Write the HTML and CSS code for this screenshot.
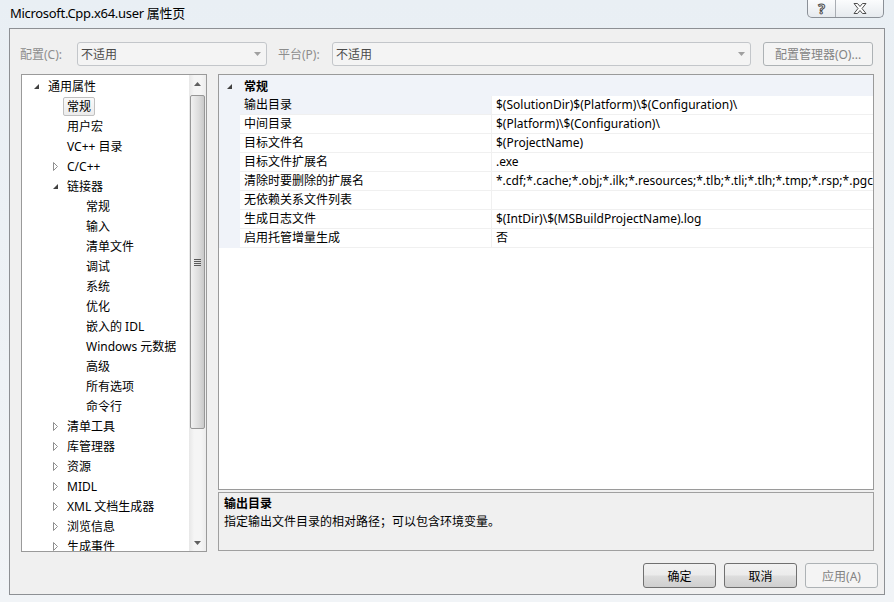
FILE: index.html
```html
<!DOCTYPE html>
<html lang="zh-CN">
<head>
    <meta charset="UTF-8">
    <meta name="viewport" content="width=device-width, initial-scale=1.0">
    <title>Microsoft.Cpp.x64.user 属性页</title>
    <link rel="stylesheet" href="styles.css">
</head>
<body>
    <div class="titlebar">
        <span class="title">Microsoft.Cpp.x64.user 属性页</span>
        <div class="caption-btns">
            <span class="cap-btn help">?</span>
            <span class="cap-btn close">
                <svg width="14" height="11" viewBox="0 0 14 11"><polygon points="1,0.5 4.5,0.5 7,3.5 9.5,0.5 13,0.5 9,5.5 13,10.5 9.5,10.5 7,7.5 4.5,10.5 1,10.5 5,5.5" fill="#fff" stroke="#4d4d4d" stroke-width="1"/></svg>
            </span>
        </div>
    </div>

    <div class="client">
        <div class="toolbar">
            <span class="field-label cfg-label">配置(C):</span>
            <div class="combo combo-cfg">
                <span>不适用</span>
                <svg class="combo-arrow" width="7" height="4" viewBox="0 0 7 4"><polygon points="0,0 7,0 3.5,4" fill="#a0a0a0"/></svg>
            </div>
            <span class="field-label plat-label">平台(P):</span>
            <div class="combo combo-plat">
                <span>不适用</span>
                <svg class="combo-arrow" width="7" height="4" viewBox="0 0 7 4"><polygon points="0,0 7,0 3.5,4" fill="#a0a0a0"/></svg>
            </div>
            <button class="btn btn-disabled cfg-btn">配置管理器(O)...</button>
        </div>

        <div class="main">
            <div class="tree">
                <ul class="tree-list">
                    <li class="node lv0"><span class="tw open"></span><span class="label">通用属性</span></li>
                    <li class="node lv1"><span class="tw"></span><span class="label selected">常规</span></li>
                    <li class="node lv1"><span class="tw"></span><span class="label">用户宏</span></li>
                    <li class="node lv1"><span class="tw"></span><span class="label">VC++ 目录</span></li>
                    <li class="node lv1"><span class="tw closed"></span><span class="label">C/C++</span></li>
                    <li class="node lv1"><span class="tw open"></span><span class="label">链接器</span></li>
                    <li class="node lv2"><span class="tw"></span><span class="label">常规</span></li>
                    <li class="node lv2"><span class="tw"></span><span class="label">输入</span></li>
                    <li class="node lv2"><span class="tw"></span><span class="label">清单文件</span></li>
                    <li class="node lv2"><span class="tw"></span><span class="label">调试</span></li>
                    <li class="node lv2"><span class="tw"></span><span class="label">系统</span></li>
                    <li class="node lv2"><span class="tw"></span><span class="label">优化</span></li>
                    <li class="node lv2"><span class="tw"></span><span class="label">嵌入的 IDL</span></li>
                    <li class="node lv2"><span class="tw"></span><span class="label">Windows 元数据</span></li>
                    <li class="node lv2"><span class="tw"></span><span class="label">高级</span></li>
                    <li class="node lv2"><span class="tw"></span><span class="label">所有选项</span></li>
                    <li class="node lv2"><span class="tw"></span><span class="label">命令行</span></li>
                    <li class="node lv1"><span class="tw closed"></span><span class="label">清单工具</span></li>
                    <li class="node lv1"><span class="tw closed"></span><span class="label">库管理器</span></li>
                    <li class="node lv1"><span class="tw closed"></span><span class="label">资源</span></li>
                    <li class="node lv1"><span class="tw closed"></span><span class="label">MIDL</span></li>
                    <li class="node lv1"><span class="tw closed"></span><span class="label">XML 文档生成器</span></li>
                    <li class="node lv1"><span class="tw closed"></span><span class="label">浏览信息</span></li>
                    <li class="node lv1"><span class="tw closed"></span><span class="label">生成事件</span></li>
                </ul>
                <div class="scrollbar">
                    <div class="sb-btn"><svg width="7" height="4" viewBox="0 0 7 4"><polygon points="3.5,0 7,4 0,4" fill="#606060"/></svg></div>
                    <div class="sb-track">
                        <div class="sb-thumb">
                            <span class="grip"></span>
                        </div>
                    </div>
                    <div class="sb-btn"><svg width="7" height="4" viewBox="0 0 7 4"><polygon points="0,0 7,0 3.5,4" fill="#606060"/></svg></div>
                </div>
            </div>

            <div class="right">
                <div class="grid">
                    <div class="grid-cat">
                        <span class="cat-tw"></span>
                        <span class="cat-name">常规</span>
                    </div>
                    <div class="props">
                        <div class="row current"><span class="name">输出目录</span><span class="value">$(SolutionDir)$(Platform)\$(Configuration)\</span></div>
                        <div class="row"><span class="name">中间目录</span><span class="value">$(Platform)\$(Configuration)\</span></div>
                        <div class="row"><span class="name">目标文件名</span><span class="value">$(ProjectName)</span></div>
                        <div class="row"><span class="name">目标文件扩展名</span><span class="value">.exe</span></div>
                        <div class="row"><span class="name">清除时要删除的扩展名</span><span class="value">*.cdf;*.cache;*.obj;*.ilk;*.resources;*.tlb;*.tli;*.tlh;*.tmp;*.rsp;*.pgc;*.pgd;*.meta;*.tlog;*.manifest;*.res</span></div>
                        <div class="row"><span class="name">无依赖关系文件列表</span><span class="value"></span></div>
                        <div class="row"><span class="name">生成日志文件</span><span class="value">$(IntDir)\$(MSBuildProjectName).log</span></div>
                        <div class="row"><span class="name">启用托管增量生成</span><span class="value">否</span></div>
                    </div>
                </div>
                <div class="desc">
                    <div class="desc-title">输出目录</div>
                    <div class="desc-text">指定输出文件目录的相对路径；可以包含环境变量。</div>
                </div>
            </div>
        </div>

        <div class="footer">
            <button class="btn">确定</button>
            <button class="btn">取消</button>
            <button class="btn btn-disabled">应用(A)</button>
        </div>
    </div>
</body>
</html>
```

FILE: styles.css
```css
body {
    margin: 0;
    width: 894px;
    height: 602px;
    overflow: hidden;
    background: linear-gradient(#e9eff4, #f1f4f7);
    font-family: "Noto Sans", "Noto Sans CJK SC", sans-serif;
    font-size: 12px;
    color: #000;
}
.titlebar {
    height: 28px;
    display: flex;
    justify-content: space-between;
    align-items: flex-start;
}
.title {
    margin: 4px 0 0 10px;
    font-size: 13px;
    letter-spacing: -0.3px;
    line-height: 18px;
}
.caption-btns {
    display: flex;
    height: 17px;
    margin-right: 10px;
    border: 1px solid #8b9097;
    border-top: none;
    border-radius: 0 0 5px 5px;
    background: linear-gradient(#fbfcfd, #e6eaee);
    overflow: hidden;
}
.cap-btn {
    display: flex;
    align-items: center;
    justify-content: center;
}
.help {
    width: 27px;
    border-right: 1px solid #a9adb3;
    font-size: 14px;
    font-weight: bold;
    color: #fff;
    -webkit-text-stroke: 1px #4d4d4d;
    line-height: 17px;
}
.close {
    width: 47px;
}
.client {
    margin-left: 9px;
    width: 874px;
    height: 565px;
    border: 1px solid #8d9094;
    background: #f0f0f0;
    display: flex;
    flex-direction: column;
}
.toolbar {
    display: flex;
    align-items: center;
    height: 24px;
    margin-top: 13px;
    padding: 0 10px;
}
.field-label {
    color: #8d8d8d;
}
.cfg-label {
    width: 57px;
}
.plat-label {
    width: 54px;
    margin-left: 11px;
}
.combo {
    box-sizing: border-box;
    height: 24px;
    border: 1px solid #c3c6ca;
    border-radius: 3px;
    background: #f4f4f4;
    display: flex;
    align-items: center;
    justify-content: space-between;
    padding: 0 5px 0 3px;
    color: #4a4a4a;
}
.combo-cfg {
    width: 190px;
}
.combo-plat {
    width: 419px;
}
.btn {
    box-sizing: border-box;
    width: 73px;
    height: 25px;
    border: 1px solid #707070;
    border-radius: 3px;
    background: linear-gradient(#f2f2f2 0%, #ebebeb 48%, #dddddd 52%, #cfcfcf 100%);
    font-family: inherit;
    font-size: 12px;
    color: #000;
    padding: 0;
}
.btn-disabled {
    border-color: #adb2b5;
    background: #f4f4f4;
    color: #838383;
}
.cfg-btn {
    width: 110px;
    height: 24px;
    margin-left: 12px;
}
.main {
    display: flex;
    margin-top: 8px;
    padding-left: 11px;
    gap: 11px;
}
.tree {
    box-sizing: border-box;
    width: 186px;
    height: 478px;
    border: 1px solid #9a9a9a;
    background: #fff;
    display: flex;
    overflow: hidden;
}
.tree-list {
    flex: 1;
    list-style: none;
    margin: 0;
    padding: 1px 0 0;
    overflow: hidden;
}
.node {
    display: flex;
    align-items: center;
    height: 20px;
    white-space: nowrap;
}
.lv0 { padding-left: 11px; }
.lv1 { padding-left: 30px; }
.lv2 { padding-left: 49px; }
.tw {
    width: 11px;
    height: 20px;
    flex: none;
    position: relative;
}
.tw.open::before {
    content: "";
    position: absolute;
    left: 1px;
    top: 8px;
    border-style: solid;
    border-width: 0 0 5px 5px;
    border-color: transparent transparent #404040 transparent;
}
.tw.closed::before {
    content: "";
    position: absolute;
    left: 1px;
    top: 6px;
    width: 5px;
    height: 9px;
    background: url("data:image/svg+xml;utf8,<svg xmlns='http://www.w3.org/2000/svg' width='5' height='9'><polygon points='0.5,0.5 4.5,4.5 0.5,8.5' fill='white' stroke='%23909090'/></svg>");
}
.label {
    box-sizing: border-box;
    height: 19px;
    line-height: 17px;
    padding: 0 3px;
    border: 1px solid transparent;
    border-radius: 2px;
}
.label.selected {
    border-color: #c0c0c0;
    background: linear-gradient(#fafafa, #ececec);
}
.scrollbar {
    width: 17px;
    flex: none;
    display: flex;
    flex-direction: column;
    background: linear-gradient(90deg, #e7e7e7, #f5f5f5 30%, #f5f5f5 70%, #ececec);
}
.sb-btn {
    height: 17px;
    display: flex;
    align-items: center;
    justify-content: center;
}
.sb-track {
    flex: 1;
    padding: 3px 1px 0;
}
.sb-thumb {
    box-sizing: border-box;
    height: 334px;
    border: 1px solid #979797;
    border-radius: 2px;
    background: linear-gradient(90deg, #f1f1f1, #dcdcdc 60%, #c9c9c9);
    display: flex;
    align-items: center;
    justify-content: center;
}
.grip {
    width: 7px;
    height: 7px;
    background: repeating-linear-gradient(#5a5a5a 0 1px, transparent 1px 2px);
}
.right {
    width: 656px;
    display: flex;
    flex-direction: column;
    gap: 2px;
}
.grid {
    box-sizing: border-box;
    height: 416px;
    border: 1px solid #9a9a9a;
    background: #fff;
    overflow: hidden;
}
.grid-cat {
    height: 21px;
    display: flex;
    align-items: center;
    background: #f0f3f9;
}
.cat-tw {
    width: 5px;
    height: 5px;
    margin: 0 12px 0 8px;
    position: relative;
    top: 1px;
}
.cat-tw::before {
    content: "";
    position: absolute;
    left: 0;
    top: 0;
    border-style: solid;
    border-width: 0 0 5px 5px;
    border-color: transparent transparent #404040 transparent;
}
.cat-name {
    font-weight: bold;
}
.props {
    padding-left: 21px;
    background: linear-gradient(90deg, #f0f3f9 21px, #fff 21px);
}
.row {
    box-sizing: border-box;
    height: 19px;
    display: flex;
    border-bottom: 1px solid #f0f0f0;
    background: #fff;
    white-space: nowrap;
    line-height: 18px;
}
.row .name {
    box-sizing: border-box;
    width: 251px;
    flex: none;
    padding-left: 4px;
}
.row .value {
    flex: 1;
    padding-left: 4px;
    border-left: 1px solid #f0f0f0;
    overflow: hidden;
}
.row.current .name {
    background: #f0f3f9;
}
.desc {
    box-sizing: border-box;
    height: 59px;
    border: 1px solid #a0a0a0;
    padding: 2px 5px 0;
    line-height: 18px;
}
.desc-title {
    font-weight: bold;
}
.footer {
    display: flex;
    justify-content: flex-end;
    gap: 8px;
    margin-top: 11px;
    padding-right: 6px;
}
```
